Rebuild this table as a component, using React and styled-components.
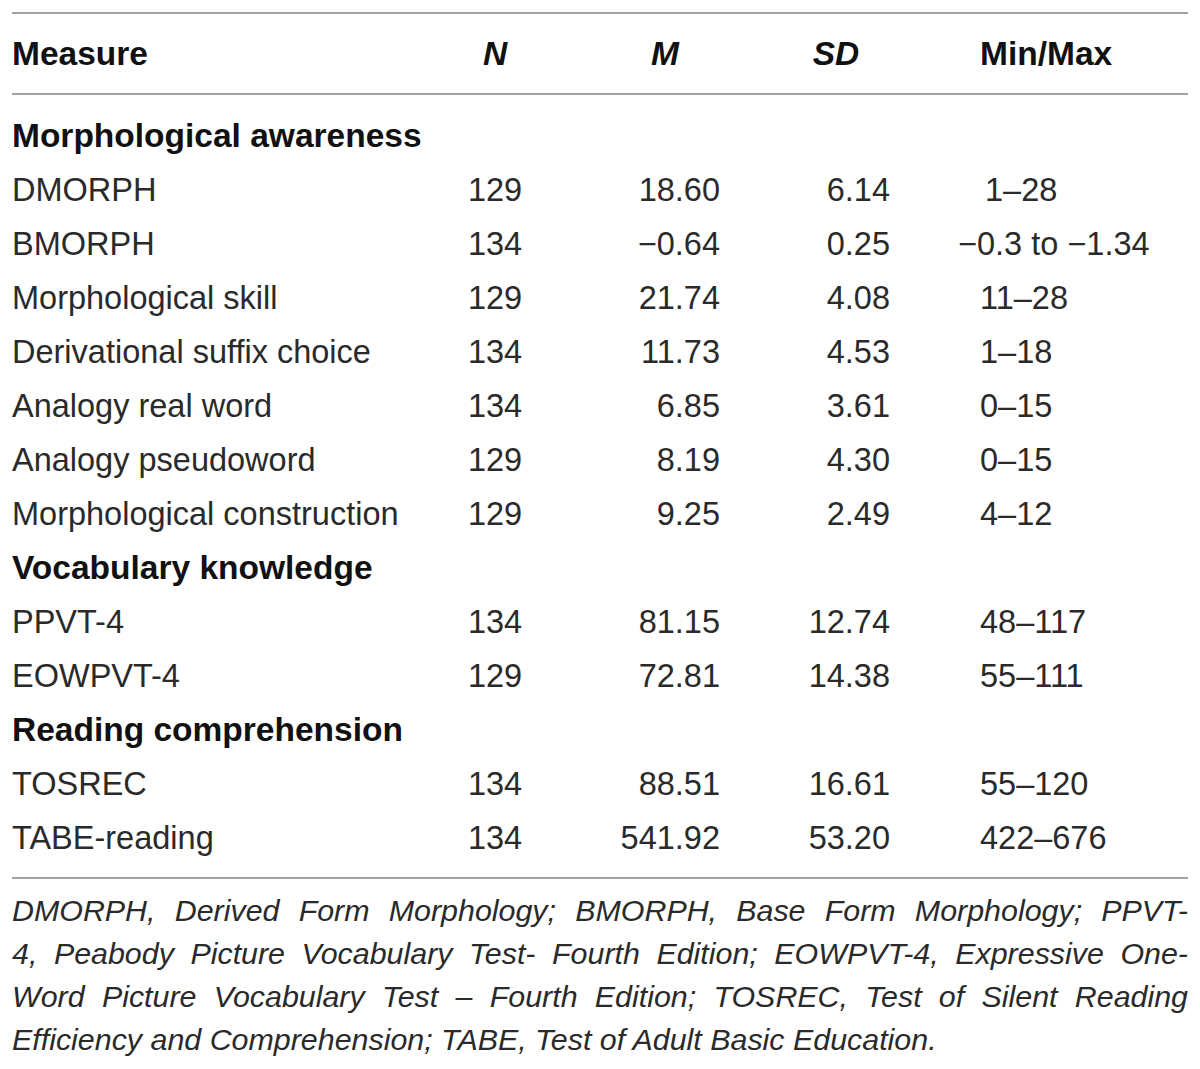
import styled, { createGlobalStyle } from "styled-components";

const GlobalStyle = createGlobalStyle`
  html, body {
    margin: 0;
    padding: 0;
    background: #ffffff;
  }
  body {
    font-family: "Liberation Sans", Arial, sans-serif;
    color: #231f20;
  }
`;

const Page = styled.div`
  width: 1200px;
  padding: 12px;
  box-sizing: border-box;
`;

const Table = styled.div`
  display: flex;
  flex-direction: column;
  border-top: 2px solid #a3a3a3;
`;

const Row = styled.div`
  display: grid;
  grid-template-columns: 432px 102px 214px 180px 1fr;
  align-items: center;
  height: ${(p) => p.$h || 54}px;
`;

const HeadRow = styled(Row)`
  border-bottom: 2px solid #a3a3a3;
`;

const Body = styled.div`
  display: flex;
  flex-direction: column;
  padding: 14px 0 12px;
  border-bottom: 2px solid #a3a3a3;
`;

const Cell = styled.div`
  font-size: ${(p) => (p.$bold ? 33.5 : 32.5)}px;
  line-height: 54px;
  white-space: nowrap;
  text-align: ${(p) => p.$align || "left"};
  padding-left: ${(p) => p.$pl || 0}px;
  padding-right: ${(p) => p.$pr || 0}px;
  font-weight: ${(p) => (p.$bold ? 700 : 400)};
  font-style: ${(p) => (p.$italic ? "italic" : "normal")};
  color: ${(p) => (p.$bold ? "#111" : "#2a2a2a")};
`;

const Section = styled.div`
  font-size: 33.5px;
  line-height: 54px;
  height: 54px;
  font-weight: 700;
  color: #111;
`;

const Note = styled.div`
  padding-top: 10px;
  font-size: 30.4px;
  font-style: italic;
  line-height: 43px;
  color: #2a2a2a;
`;

const NoteLine = styled.div`
  text-align: ${(p) => (p.$last ? "left" : "justify")};
  text-align-last: ${(p) => (p.$last ? "left" : "justify")};
  white-space: nowrap;
`;

const headCols = [
  { align: "left" },
  { align: "center", italic: true },
  { align: "center", italic: true, pl: 24 },
  { align: "center", italic: true, pr: 28 },
  { align: "left", pl: 40 },
];

const dataCols = [
  { align: "left" },
  { align: "center" },
  { align: "right", pr: 40 },
  { align: "right", pr: 50 },
  { align: "left", pl: 40 },
];

const groups = [
  {
    title: "Morphological awareness",
    rows: [
      ["DMORPH", "129", "18.60", "6.14", { v: "1–28", pl: 45 }],
      ["BMORPH", "134", "−0.64", "0.25", { v: "−0.3 to −1.34", pl: 18 }],
      ["Morphological skill", "129", "21.74", "4.08", "11–28"],
      ["Derivational suffix choice", "134", "11.73", "4.53", "1–18"],
      ["Analogy real word", "134", "6.85", "3.61", "0–15"],
      ["Analogy pseudoword", "129", "8.19", "4.30", "0–15"],
      ["Morphological construction", "129", "9.25", "2.49", "4–12"],
    ],
  },
  {
    title: "Vocabulary knowledge",
    rows: [
      ["PPVT-4", "134", "81.15", "12.74", "48–117"],
      ["EOWPVT-4", "129", "72.81", "14.38", "55–111"],
    ],
  },
  {
    title: "Reading comprehension",
    rows: [
      ["TOSREC", "134", "88.51", "16.61", "55–120"],
      ["TABE-reading", "134", "541.92", "53.20", "422–676"],
    ],
  },
];

const notes = [
  "DMORPH, Derived Form Morphology; BMORPH, Base Form Morphology; PPVT-",
  "4, Peabody Picture Vocabulary Test- Fourth Edition; EOWPVT-4, Expressive One-",
  "Word Picture Vocabulary Test – Fourth Edition; TOSREC, Test of Silent Reading",
  "Efficiency and Comprehension; TABE, Test of Adult Basic Education.",
];

const App = () => {
  const head = ["Measure", "N", "M", "SD", "Min/Max"];
  return (
    <Page>
      <GlobalStyle />
      <Table>
        <HeadRow $h={79}>
          {head.map((h, i) => (
            <Cell
              key={h}
              $bold
              $align={headCols[i].align}
              $italic={headCols[i].italic}
              $pl={headCols[i].pl}
              $pr={headCols[i].pr}
            >
              {h}
            </Cell>
          ))}
        </HeadRow>
        <Body>
          {groups.map((g) => (
            <div key={g.title}>
              <Section>{g.title}</Section>
              {g.rows.map((r) => (
                <Row key={r[0]}>
                  {r.map((v, i) => {
                    const text = typeof v === "string" ? v : v.v;
                    const pl = typeof v === "string" ? dataCols[i].pl : v.pl;
                    return (
                      <Cell
                        key={i}
                        $align={dataCols[i].align}
                        $pl={pl}
                        $pr={dataCols[i].pr}
                      >
                        {text}
                      </Cell>
                    );
                  })}
                </Row>
              ))}
            </div>
          ))}
        </Body>
        <Note>
          {notes.map((n, i) => (
            <NoteLine key={i} $last={i === notes.length - 1}>
              {n}
            </NoteLine>
          ))}
        </Note>
      </Table>
    </Page>
  );
};

export default App;
